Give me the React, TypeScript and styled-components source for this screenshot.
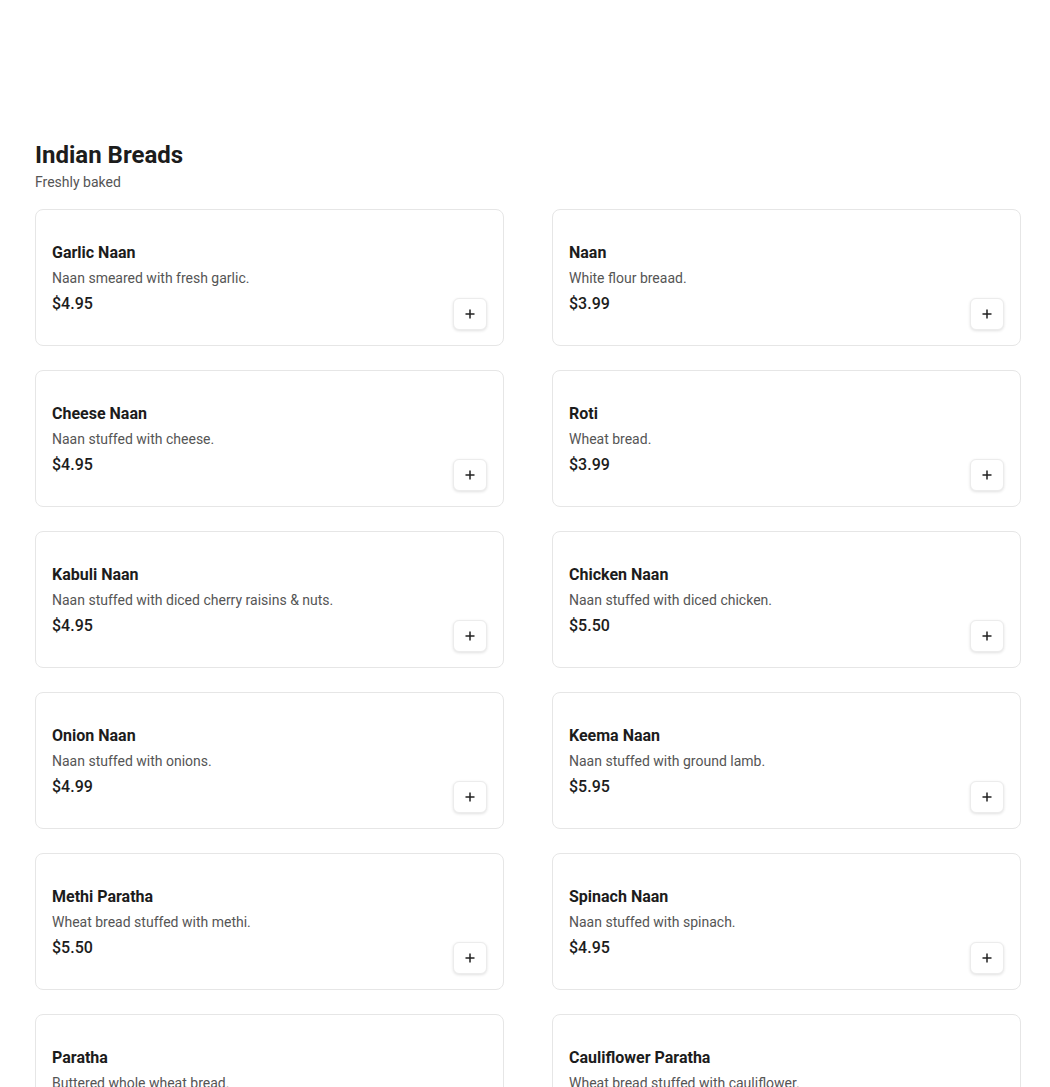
import React from "react";
import styled, { createGlobalStyle } from "styled-components";

const Global = createGlobalStyle`
  html, body { margin: 0; padding: 0; background: #ffffff; }
  body { font-family: Roboto, "Liberation Sans", Arial, sans-serif; color: #1a1a1a; }
`;

const Page = styled.main`
  padding: 138px 29px 0 35px;
`;

const Header = styled.header`
  margin-bottom: 17px;
`;

const Title = styled.h2`
  margin: 1px 0 0;
  font-size: 24px;
  line-height: 32px;
  font-weight: 700;
  color: #1c1c1c;
`;

const Subtitle = styled.p`
  margin: 1px 0 0;
  font-size: 14px;
  line-height: 20px;
  color: #555;
`;

const Grid = styled.div`
  display: grid;
  grid-template-columns: 469px 469px;
  column-gap: 48px;
  row-gap: 24px;
`;

const Card = styled.div`
  display: flex;
  justify-content: space-between;
  align-items: flex-end;
  border: 1px solid #e6e6e6;
  border-radius: 8px;
  padding: 31px 16px 15px 16px;
  box-sizing: border-box;
  height: 137px;
`;

const Info = styled.div`
  align-self: flex-start;
  display: flex;
  flex-direction: column;
`;

const Name = styled.div`
  font-size: 16px;
  line-height: 24px;
  font-weight: 700;
  color: #1c1c1c;
`;

const Desc = styled.div`
  margin-top: 3px;
  font-size: 14px;
  line-height: 20px;
  color: #555;
`;

const Price = styled.div`
  margin-top: 4px;
  font-size: 16px;
  line-height: 24px;
  font-weight: 500;
  color: #1c1c1c;
`;

const AddButton = styled.button`
  width: 34px;
  height: 32px;
  display: flex;
  align-items: center;
  justify-content: center;
  padding: 0;
  border: 1px solid #ececec;
  border-radius: 6px;
  background: #fff;
  box-shadow: 0 1px 3px rgba(0, 0, 0, 0.12);
  cursor: pointer;
`;

const items = [
  ["Garlic Naan", "Naan smeared with fresh garlic.", "$4.95"],
  ["Naan", "White flour breaad.", "$3.99"],
  ["Cheese Naan", "Naan stuffed with cheese.", "$4.95"],
  ["Roti", "Wheat bread.", "$3.99"],
  ["Kabuli Naan", "Naan stuffed with diced cherry raisins & nuts.", "$4.95"],
  ["Chicken Naan", "Naan stuffed with diced chicken.", "$5.50"],
  ["Onion Naan", "Naan stuffed with onions.", "$4.99"],
  ["Keema Naan", "Naan stuffed with ground lamb.", "$5.95"],
  ["Methi Paratha", "Wheat bread stuffed with methi.", "$5.50"],
  ["Spinach Naan", "Naan stuffed with spinach.", "$4.95"],
  ["Paratha", "Buttered whole wheat bread.", "$4.95"],
  ["Cauliflower Paratha", "Wheat bread stuffed with cauliflower.", "$5.50"],
];

const Plus = () => (
  <svg width="12" height="12" viewBox="0 0 12 12" fill="none">
    <path d="M6 1.5v9M1.5 6h9" stroke="#222" strokeWidth="1.5" />
  </svg>
);

export default function App() {
  return (
    <>
      <Global />
      <Page>
        <Header>
          <Title>Indian Breads</Title>
          <Subtitle>Freshly baked</Subtitle>
        </Header>
        <Grid>
          {items.map(([n, d, p]) => (
            <Card key={n}>
              <Info>
                <Name>{n}</Name>
                <Desc>{d}</Desc>
                <Price>{p}</Price>
              </Info>
              <AddButton aria-label={`Add ${n}`}>
                <Plus />
              </AddButton>
            </Card>
          ))}
        </Grid>
      </Page>
    </>
  );
}
